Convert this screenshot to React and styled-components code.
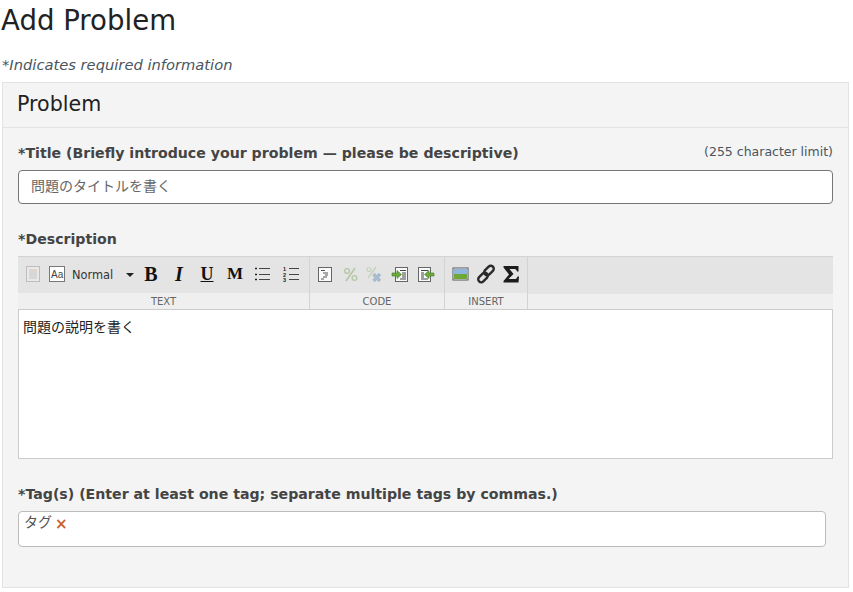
import React from 'react'
import styled, { createGlobalStyle } from 'styled-components'

const GlobalStyle = createGlobalStyle`
  html, body { margin: 0; padding: 0; background: #fff; }
  body { font-family: "DejaVu Sans", "Noto Sans CJK JP", sans-serif; color: #222; overflow: hidden; }
`

const Page = styled.div`
  width: 853px;
  height: 592px;
  padding: 0 4px 0 2px;
  box-sizing: border-box;
`
const Heading = styled.h1`
  margin: 0 0 0 -1px;
  height: 55px;
  padding-top: 4px;
  box-sizing: border-box;
  font-size: 27.6px;
  line-height: 34px;
  font-weight: 400;
  color: #222;
`
const Note = styled.p`
  margin: 0;
  height: 27px;
  font-size: 14.7px;
  line-height: 20px;
  font-style: italic;
  color: #4a5560;
`
const Panel = styled.section`
  height: 506px;
  box-sizing: border-box;
  background: #f4f4f4;
  border: 1px solid #e3e3e3;
`
const PanelHeader = styled.h2`
  margin: 0;
  height: 45px;
  box-sizing: border-box;
  padding: 6px 14px 0;
  font-size: 20.6px;
  line-height: 30px;
  font-weight: 400;
  border-bottom: 1px solid #e3e3e3;
`
const PanelBody = styled.div`
  padding: 14px 15px 0;
  display: flex;
  flex-direction: column;
`
const LabelRow = styled.div`
  display: flex;
  justify-content: space-between;
  align-items: center;
  height: 20px;
  margin-bottom: 8px;
`
const Label = styled.label`
  font-size: 14.15px;
  line-height: 20px;
  padding-top: 1px;
  font-weight: 700;
  color: #444;
  white-space: nowrap;
`
const Limit = styled.span`
  font-size: 12.5px;
  color: #4a5560;
  margin-top: -2px;
`
const TitleInput = styled.div`
  height: 34px;
  box-sizing: border-box;
  background: #fff;
  border: 1px solid #767676;
  border-radius: 4px;
  padding: 0 12px;
  font-size: 14px;
  line-height: 30px;
  color: #666;
  margin-bottom: 24px;
`
const Toolbar = styled.div`
  display: flex;
  height: 53px;
  box-sizing: border-box;
  background: #efefef;
  border-top: 1px solid #d3d3d3;
`
const Group = styled.div`
  width: ${p => p.$width}px;
  box-sizing: border-box;
  border-right: 1px solid #d3d3d3;
  display: flex;
  flex-direction: column;
`
const Tools = styled.div`
  height: 37px;
  background: #e4e4e4;
  display: flex;
  align-items: center;
  padding-left: ${p => p.$pad || 0}px;
  box-sizing: border-box;
`
const GroupName = styled.div`
  flex: 1;
  text-align: center;
  font-size: 10px;
  line-height: 15px;
  color: #666;
  padding-top: 1px;
`
const Filler = styled.div`
  flex: 1;
  height: 37px;
  background: #e4e4e4;
`
const Tool = styled.svg`
  display: block;
  flex: none;
  width: ${p => p.$w || 18}px;
  height: 20px;
  margin-right: ${p => p.$gap || 0}px;
  margin-top: -2px;
`
const StyleName = styled.span`
  font-size: 11.4px;
  width: 54px;
  color: #333;
  margin-top: -1px;
  flex: none;
`
const Caret = styled.span`
  width: 0;
  height: 0;
  flex: none;
  border-left: 4px solid transparent;
  border-right: 4px solid transparent;
  border-top: 4px solid #222;
  margin-right: 8px;
`
const LetterButton = styled.span`
  flex: none;
  width: 18px;
  margin-right: 10px;
  margin-top: -3px;
  text-align: center;
  font-family: "Liberation Serif", serif;
  font-weight: 700;
  font-size: ${p => p.$size || 20}px;
  line-height: 22px;
  font-style: ${p => (p.$italic ? 'italic' : 'normal')};
  text-decoration: ${p => (p.$underline ? 'underline' : 'none')};
  color: #111;
`
const Editor = styled.div`
  height: 150px;
  box-sizing: border-box;
  background: #fff;
  border: 1px solid #ccc;
  padding: 7px 4px;
  font-size: 14px;
  line-height: 20px;
  color: #222;
  margin-bottom: 24px;
`
const TagBox = styled.div`
  width: 808px;
  height: 36px;
  box-sizing: border-box;
  background: #fff;
  border: 1px solid #bbb;
  border-radius: 4px;
  padding: 0 5px;
  display: flex;
  align-items: flex-start;
  gap: 3px;
  font-size: 14px;
  line-height: 20px;
  color: #555;
`
const TagRemove = styled.span`
  color: #c8622a;
  font-size: 15px;
  font-weight: 700;
  line-height: 24px;
`

const PageIcon = () => (
  <Tool $gap={6} viewBox="0 0 18 20">
    <rect x="2.5" y="2.5" width="13" height="15" fill="#e9e9e9" stroke="#bdbdbd" />
    <path d="M5 6h8" stroke="#e3b9a4" />
    <path d="M5 8h8M5 10h8M5 12h8M5 14h8" stroke="#c4c4c4" />
  </Tool>
)
const FontIcon = () => (
  <Tool $gap={6} viewBox="0 0 18 20">
    <rect x="1.5" y="2.5" width="15" height="15" fill="#fff" stroke="#777" />
    <text x="3" y="14" fontSize="10" fontFamily="Liberation Sans" fill="#444">Aa</text>
  </Tool>
)
const BulletList = () => (
  <Tool $gap={10} viewBox="0 0 18 20">
    <path d="M5 4.5h11M5 10.5h11M5 15.5h11" stroke="#444" />
    <path d="M1 4.5h2M1 10.500h2M1 15.500h2" stroke="#222" strokeWidth="1.6" />
  </Tool>
)
const NumberList = () => (
  <Tool viewBox="0 0 18 20">
    <path d="M7 4.500h10M7 10.500h10M7 15.500h10" stroke="#444" />
    <text x="1" y="7" fontSize="5.500" fontFamily="Liberation Sans" fontWeight="700" fill="#222">1</text>
    <text x="1" y="12.500" fontSize="5.500" fontFamily="Liberation Sans" fontWeight="700" fill="#222">2</text>
    <text x="1" y="18" fontSize="5.500" fontFamily="Liberation Sans" fontWeight="700" fill="#222">3</text>
  </Tool>
)
const CodeIcon = () => (
  <Tool $gap={8} $w={16} viewBox="0 0 16 20">
    <rect x="1.500" y="3.500" width="13" height="14" fill="#fafafa" stroke="#666" />
    <path d="M4 6.500h4M6 9h5M8 11h3M6 13h4M4 15h3" stroke="#555" />
  </Tool>
)
const Percent = () => (
  <Tool $gap={6} viewBox="0 0 18 20">
    <path d="M5 17L14 4" stroke="#b3c7a5" strokeWidth="1.6" />
    <circle cx="6" cy="7" r="2.400" fill="none" stroke="#b3c7a5" strokeWidth="1.300" />
    <circle cx="13.500" cy="14" r="2.400" fill="none" stroke="#b3c7a5" strokeWidth="1.300" />
  </Tool>
)
const PercentOff = () => (
  <Tool $gap={8} viewBox="0 0 18 20">
    <path d="M3 14L11 3" stroke="#c6d2bc" strokeWidth="1.400" />
    <circle cx="4" cy="5.500" r="2" fill="none" stroke="#c6d2bc" strokeWidth="1.200" />
    <path d="M8.500 10l6.500 7M15 10l-6.500 7" stroke="#a9bccb" strokeWidth="3.400" />
  </Tool>
)
const IndentRight = () => (
  <Tool $gap={8} viewBox="0 0 18 20">
    <rect x="4.500" y="3.500" width="12" height="14" fill="#fafafa" stroke="#666" />
    <path d="M9 6.500h6M11 9h4M11 11h4M11 13h4M9 15h6" stroke="#444" />
    <path d="M1 9h5V6.500l4.500 4-4.500 4V12H1z" fill="#6cab3c" stroke="#3f7a22" strokeWidth=".6" />
  </Tool>
)
const IndentLeft = () => (
  <Tool viewBox="0 0 18 20">
    <rect x="1.500" y="3.500" width="12" height="14" fill="#fafafa" stroke="#666" />
    <path d="M4 6.500h7M4 9h3M4 11h3M4 13h3M4 15h7" stroke="#444" />
    <path d="M17 9h-5V6.500l-4.500 4 4.500 4V12h5z" fill="#6cab3c" stroke="#3f7a22" strokeWidth=".6" />
  </Tool>
)
const ImageIcon = () => (
  <Tool $gap={8} $w={17} viewBox="0 0 17 20">
    <rect x="1" y="4" width="15" height="12" fill="#fff" stroke="#555" />
    <rect x="2" y="5" width="13" height="5" fill="#8fb6de" />
    <rect x="2" y="10" width="13" height="5" fill="#6ea838" />
  </Tool>
)
const LinkIcon = () => (
  <Tool $gap={7} viewBox="0 0 18 20">
    <g fill="none" stroke="#2a2a2a" strokeWidth="2.400">
      <rect x="9" y="1" width="6" height="11" rx="3" transform="rotate(45 12 6.500)" />
      <rect x="3" y="8" width="6" height="11" rx="3" transform="rotate(45 6 13.500)" />
    </g>
  </Tool>
)
const SigmaIcon = () => (
  <Tool viewBox="0 0 18 20">
    <path d="M1.500 2H16.500V7.500H15C14.500 5.500 13.500 5 12 5H7.500L11.500 10 6.500 15H12.500C14 15 15 14.500 15.500 12.500H17L16.500 18.500H1.500V17L7 10.500 1.500 3.500z" fill="#1c1c1c" />
  </Tool>
)

export default function App() {
  return (
    <Page>
      <GlobalStyle />
      <Heading>Add Problem</Heading>
      <Note>*Indicates required information</Note>
      <Panel>
        <PanelHeader>Problem</PanelHeader>
        <PanelBody>
          <LabelRow>
            <Label>*Title (Briefly introduce your problem — please be descriptive)</Label>
            <Limit>(255 character limit)</Limit>
          </LabelRow>
          <TitleInput>問題のタイトルを書く</TitleInput>
          <LabelRow>
            <Label>*Description</Label>
          </LabelRow>
          <Toolbar>
            <Group $width={292}>
              <Tools $pad={6}>
                <PageIcon />
                <FontIcon />
                <StyleName>Normal</StyleName>
                <Caret />
                <LetterButton>B</LetterButton>
                <LetterButton $italic>I</LetterButton>
                <LetterButton $underline $size={18}>U</LetterButton>
                <LetterButton $size={17}>M</LetterButton>
                <BulletList />
                <NumberList />
              </Tools>
              <GroupName>TEXT</GroupName>
            </Group>
            <Group $width={135}>
              <Tools $pad={7}>
                <CodeIcon />
                <Percent />
                <PercentOff />
                <IndentRight />
                <IndentLeft />
              </Tools>
              <GroupName>CODE</GroupName>
            </Group>
            <Group $width={83}>
              <Tools $pad={7}>
                <ImageIcon />
                <LinkIcon />
                <SigmaIcon />
              </Tools>
              <GroupName>INSERT</GroupName>
            </Group>
            <Filler />
          </Toolbar>
          <Editor>問題の説明を書く</Editor>
          <LabelRow>
            <Label>*Tag(s) (Enter at least one tag; separate multiple tags by commas.)</Label>
          </LabelRow>
          <TagBox>
            <span>タグ</span>
            <TagRemove>×</TagRemove>
          </TagBox>
        </PanelBody>
      </Panel>
    </Page>
  )
}
